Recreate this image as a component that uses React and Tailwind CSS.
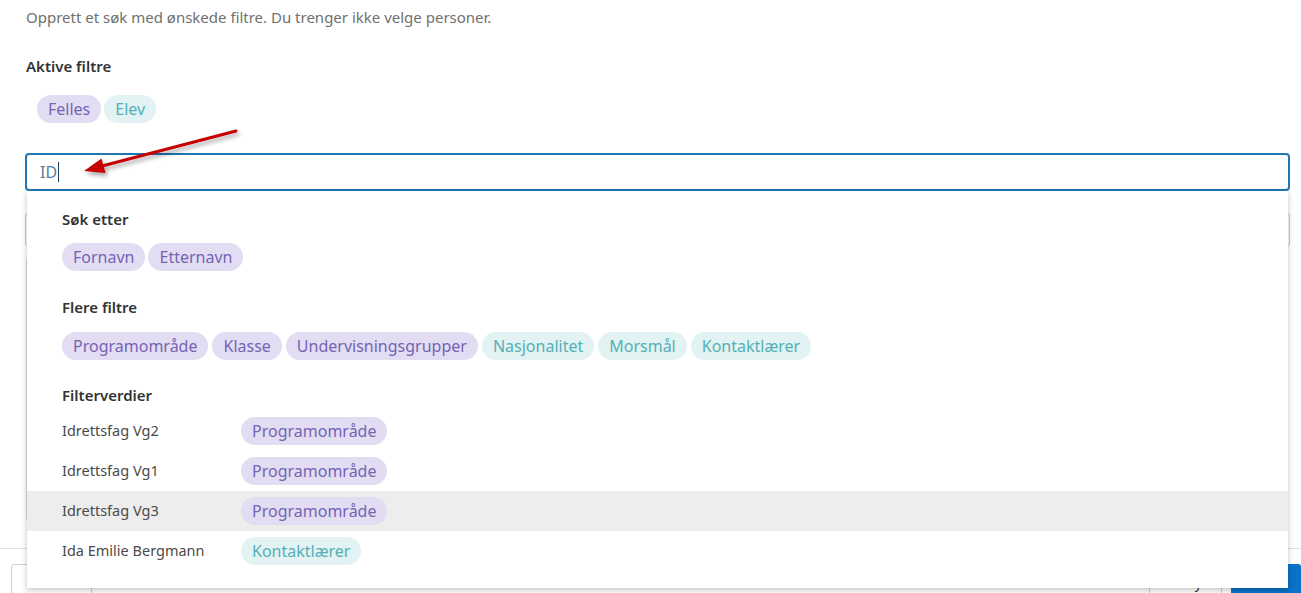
import React from "react";

const purple = "bg-[#e3ddf3] text-[#7464b4]";
const teal = "bg-[#e3f2f3] text-[#52b1b6]";

const Chip = ({ label, tone }) => (
  <span
    className={`inline-flex items-center h-[28px] px-[11px] rounded-full text-[16px] leading-none whitespace-nowrap ${
      tone === "teal" ? teal : purple
    }`}
  >
    {label}
  </span>
);

const moreFilters = [
  { label: "Programområde", tone: "purple" },
  { label: "Klasse", tone: "purple" },
  { label: "Undervisningsgrupper", tone: "purple" },
  { label: "Nasjonalitet", tone: "teal" },
  { label: "Morsmål", tone: "teal" },
  { label: "Kontaktlærer", tone: "teal" },
];

const values = [
  { name: "Idrettsfag Vg2", tag: "Programområde", tone: "purple" },
  { name: "Idrettsfag Vg1", tag: "Programområde", tone: "purple" },
  { name: "Idrettsfag Vg3", tag: "Programområde", tone: "purple", active: true },
  { name: "Ida Emilie Bergmann", tag: "Kontaktlærer", tone: "teal" },
];

const Arrows = () => (
  <svg
    className="absolute inset-0 pointer-events-none"
    width="1301"
    height="593"
    viewBox="0 0 1301 593"
  >
    <defs>
      <filter id="shade" x="-20%" y="-50%" width="140%" height="200%">
        <feDropShadow dx="2" dy="3" stdDeviation="2" floodColor="#000" floodOpacity="0.35" />
      </filter>
    </defs>
    <g filter="url(#shade)" fill="#c40000" stroke="#c40000">
      <line x1="236" y1="131" x2="102" y2="166" strokeWidth="3" strokeLinecap="round" />
      <polygon points="84,171 105.5,173 101.5,158.5" stroke="none" />
      <line x1="563" y1="385" x2="431" y2="419" strokeWidth="3" strokeLinecap="round" />
      <polygon points="413,424 434.5,426 430.5,411.5" stroke="none" />
    </g>
  </svg>
);

const SearchDropdown = () => (
  <div className="absolute top-full left-[2px] right-[2px] bg-white shadow-[0_2px_6px_rgba(0,0,0,0.25)] pt-[18px] pb-[17px] z-10">
    <div className="px-[35px]">
      <h4 className="text-[15px] leading-[20px] font-semibold text-[#333]">Søk etter</h4>
      <div className="flex gap-[3px] mt-[14px]">
        <Chip label="Fornavn" />
        <Chip label="Etternavn" />
      </div>
      <h4 className="text-[15px] leading-[20px] font-semibold text-[#333] mt-[26px]">Flere filtre</h4>
      <div className="flex gap-[4px] mt-[15px]">
        {moreFilters.map((f) => (
          <Chip key={f.label} label={f.label} tone={f.tone} />
        ))}
      </div>
      <h4 className="text-[15px] leading-[20px] font-semibold text-[#333] mt-[25px]">Filterverdier</h4>
    </div>
    <ul className="mt-[6px]">
      {values.map((v) => (
        <li
          key={v.name}
          className={`flex items-center h-[40px] px-[35px] ${v.active ? "bg-[#ededee]" : ""}`}
        >
          <span className="w-[179px] text-[14.5px] text-[#4a4a4a]">{v.name}</span>
          <Chip label={v.tag} tone={v.tone} />
        </li>
      ))}
    </ul>
  </div>
);

export default function App() {
  return (
    <div
      className="relative w-full h-[593px] overflow-hidden bg-white flex flex-col"
      style={{ fontFamily: '"Noto Sans", "Open Sans", sans-serif' }}
    >
      <main className="flex-1 pl-[25px] pr-[11px] pt-[7px]">
        <p className="pl-[1px] text-[15px] leading-[20px] text-[#707070]">
          Opprett et søk med ønskede filtre. Du trenger ikke velge personer.
        </p>
        <h3 className="pl-[1px] mt-[29px] text-[15px] leading-[20px] font-semibold text-[#333]">
          Aktive filtre
        </h3>
        <div className="flex gap-[3px] pl-[12px] mt-[19px]">
          <Chip label="Felles" />
          <Chip label="Elev" tone="teal" />
        </div>

        <div className="relative mt-[30px]">
          <div className="h-[38px] border-2 border-[#1f76b3] rounded-[4px] flex items-center px-[13px]">
            <span className="text-[16px] text-[#5b7d9a]">ID</span>
            <span className="w-px h-[20px] bg-[#1f3b57] ml-px" />
          </div>
          <SearchDropdown />
        </div>

        {/* content hidden behind the open dropdown */}
        <div className="mt-[21px] h-[35px] border border-[#cfcfcf] rounded-[4px]" />
        <div className="mt-[12px] h-[260px] border-l border-[#dcdcdc] ml-[1px]" />
      </main>

      <footer className="h-[45px] border-t border-[#e2e2e2] flex justify-between items-start pt-[15px] pl-[11px]">
        <button className="h-[36px] px-[16px] border border-[#cfcfcf] rounded-[3px] text-[14px] text-[#333]">
          Tilbake
        </button>
        <div className="flex gap-[9px]">
          <button className="h-[36px] px-[14px] border border-[#cfcfcf] rounded-[3px] text-[14px] text-[#333]">
            Avbryt
          </button>
          <button className="h-[36px] w-[70px] bg-[#0a72c9] rounded-[3px] text-[14px] text-white">
            Neste
          </button>
        </div>
      </footer>

      <Arrows />
    </div>
  );
}
